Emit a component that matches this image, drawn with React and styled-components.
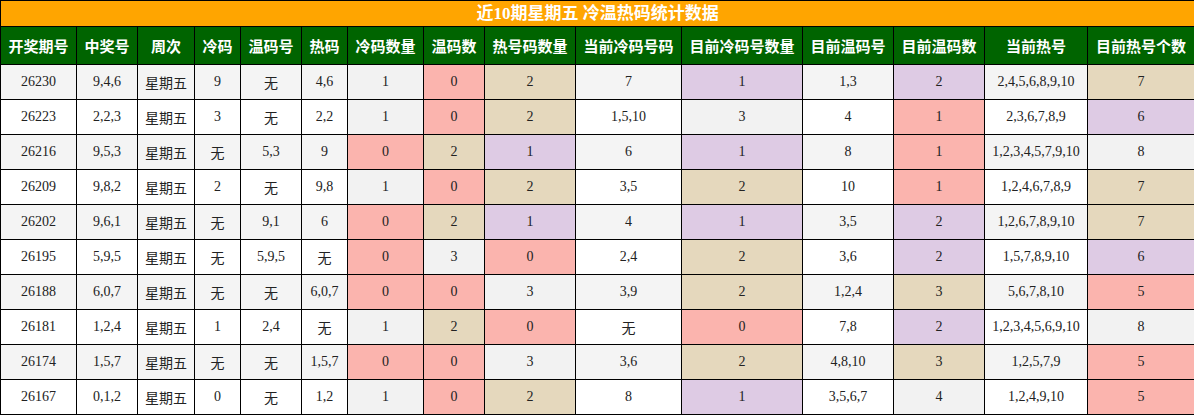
import styled, { createGlobalStyle } from 'styled-components';

const GlobalStyle = createGlobalStyle`
  html, body {
    margin: 0;
    padding: 0;
    background: #ffffff;
  }
`;

const FONT = `"Liberation Serif", "Noto Sans CJK SC", serif`;

// pastel fills used by the count columns
const FILLS = {
  p: '#fbb4ae',
  t: '#e5d8bd',
  l: '#decbe4',
  g: '#f2f2f2',
};

const HEADERS = [
  '开奖期号', '中奖号', '周次', '冷码', '温码号', '热码', '冷码数量', '温码数',
  '热号码数量', '当前冷码号码', '目前冷码号数量', '目前温码号', '目前温码数', '当前热号', '目前热号个数',
];

const WIDTHS = [76, 61, 57, 46, 61, 46, 76, 61, 91, 106, 121, 91, 91, 103, 107];

// index of the columns that carry a fill, in order
const COUNT_COLS = [6, 7, 8, 10, 12, 14];

const ROWS = [
  { cells: ['26230', '9,4,6', '星期五', '9', '无', '4,6', '1', '0', '2', '7', '1', '1,3', '2', '2,4,5,6,8,9,10', '7'], fills: 'gptllt' },
  { cells: ['26223', '2,2,3', '星期五', '3', '无', '2,2', '1', '0', '2', '1,5,10', '3', '4', '1', '2,3,6,7,8,9', '6'], fills: 'gptgpl' },
  { cells: ['26216', '9,5,3', '星期五', '无', '5,3', '9', '0', '2', '1', '6', '1', '8', '1', '1,2,3,4,5,7,9,10', '8'], fills: 'ptllpg' },
  { cells: ['26209', '9,8,2', '星期五', '2', '无', '9,8', '1', '0', '2', '3,5', '2', '10', '1', '1,2,4,6,7,8,9', '7'], fills: 'gpttpt' },
  { cells: ['26202', '9,6,1', '星期五', '无', '9,1', '6', '0', '2', '1', '4', '1', '3,5', '2', '1,2,6,7,8,9,10', '7'], fills: 'ptlllt' },
  { cells: ['26195', '5,9,5', '星期五', '无', '5,9,5', '无', '0', '3', '0', '2,4', '2', '3,6', '2', '1,5,7,8,9,10', '6'], fills: 'pgptll' },
  { cells: ['26188', '6,0,7', '星期五', '无', '无', '6,0,7', '0', '0', '3', '3,9', '2', '1,2,4', '3', '5,6,7,8,10', '5'], fills: 'ppgttp' },
  { cells: ['26181', '1,2,4', '星期五', '1', '2,4', '无', '1', '2', '0', '无', '0', '7,8', '2', '1,2,3,4,5,6,9,10', '8'], fills: 'gtpplg' },
  { cells: ['26174', '1,5,7', '星期五', '无', '无', '1,5,7', '0', '0', '3', '3,6', '2', '4,8,10', '3', '1,2,5,7,9', '5'], fills: 'ppgttp' },
  { cells: ['26167', '0,1,2', '星期五', '0', '无', '1,2', '1', '0', '2', '8', '1', '3,5,6,7', '4', '1,2,4,9,10', '5'], fills: 'gptlgp' },
];

const Table = styled.table`
  width: 1194px;
  border-collapse: collapse;
  table-layout: fixed;
  font-family: ${FONT};
  border: 1px solid #000;
`;

const TitleCell = styled.th`
  height: 25px;
  padding: 0;
  background: #ffa500;
  color: #ffffff;
  font-size: 17px;
  font-weight: bold;
  text-align: center;
  border: 1px solid #000;
  line-height: 25px;
`;

const HeadCell = styled.th`
  height: 37px;
  padding: 0;
  background: #006400;
  color: #ffffff;
  font-size: 15px;
  font-weight: bold;
  text-align: center;
  border: 1px solid #000;
  white-space: nowrap;
`;

const Row = styled.tr`
  background: ${(p) => (p.$striped ? '#f4f4f4' : '#ffffff')};
`;

const Cell = styled.td`
  height: 34px;
  padding: 0;
  background: ${(p) => p.$fill || 'transparent'};
  color: #222222;
  font-size: 14px;
  text-align: center;
  border: 1px solid #000;
  white-space: nowrap;
`;

export default function App() {
  return (
    <>
      <GlobalStyle />
      <Table>
        <colgroup>
          {WIDTHS.map((w, i) => (
            <col key={i} style={{ width: w }} />
          ))}
        </colgroup>
        <thead>
          <tr>
            <TitleCell colSpan={15}>近10期星期五 冷温热码统计数据</TitleCell>
          </tr>
          <tr>
            {HEADERS.map((h) => (
              <HeadCell key={h}>{h}</HeadCell>
            ))}
          </tr>
        </thead>
        <tbody>
          {ROWS.map((row, r) => (
            <Row key={row.cells[0]} $striped={r % 2 === 0}>
              {row.cells.map((c, i) => {
                const k = COUNT_COLS.indexOf(i);
                const fill = k >= 0 ? FILLS[row.fills[k]] : undefined;
                return (
                  <Cell key={i} $fill={fill}>
                    {c}
                  </Cell>
                );
              })}
            </Row>
          ))}
        </tbody>
      </Table>
    </>
  );
}
